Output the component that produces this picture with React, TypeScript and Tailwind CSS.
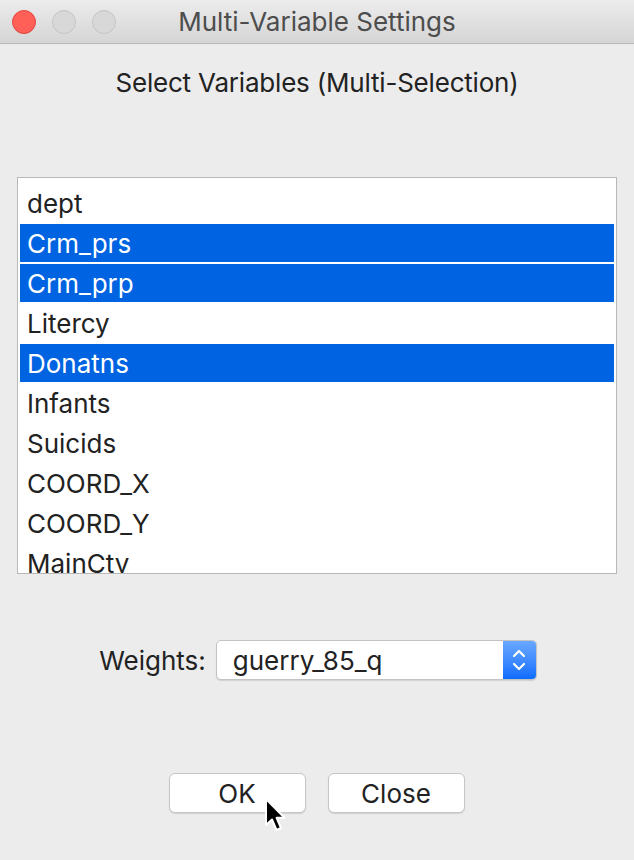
const font = { fontFamily: 'Inter, "Liberation Sans", Arial, sans-serif' };

const items = [
  { name: 'dept', selected: false },
  { name: 'Crm_prs', selected: true },
  { name: 'Crm_prp', selected: true },
  { name: 'Litercy', selected: false },
  { name: 'Donatns', selected: true },
  { name: 'Infants', selected: false },
  { name: 'Suicids', selected: false },
  { name: 'COORD_X', selected: false },
  { name: 'COORD_Y', selected: false },
  { name: 'MainCty', selected: false },
];

function TitleBar() {
  return (
    <div className="relative flex h-[44px] items-center border-b border-[#b9b9b9] bg-gradient-to-b from-[#ececec] to-[#d5d5d5]">
      <div className="ml-[12px] flex gap-[16px]">
        <span className="h-[24px] w-[24px] rounded-full border border-[#e0443e] bg-[#fe5f57]" />
        <span className="h-[24px] w-[24px] rounded-full border border-[#c4c4c4] bg-[#d8d8d8]" />
        <span className="h-[24px] w-[24px] rounded-full border border-[#c4c4c4] bg-[#d8d8d8]" />
      </div>
      <div className="absolute inset-0 flex items-center justify-center pb-[1px] text-[26px] text-[#4d4d4d]">
        Multi-Variable Settings
      </div>
    </div>
  );
}

function Cursor() {
  return (
    <svg className="absolute left-[263px] top-[796px]" width="30" height="40" viewBox="0 0 30 40">
      <path
        d="M3 3 L3 29 L9 23.5 L13.5 34 L18 32 L13.6 21.8 L21.5 21.8 Z"
        fill="#000"
        stroke="#fff"
        strokeWidth="2"
        strokeLinejoin="round"
      />
    </svg>
  );
}

export default function App() {
  return (
    <div className="relative h-[860px] w-[634px] overflow-hidden bg-[#ececec] text-[#222]" style={font}>
      <TitleBar />
      <div className="flex h-[76px] items-center justify-center pt-[1px] text-[26px] tracking-[-0.2px]">
        Select Variables (Multi-Selection)
      </div>
      <div className="mx-[17px] mt-[57px] h-[397px] overflow-hidden border border-[#b8b8b8] bg-white px-[2px] pt-[6px]">
        {items.map((it) => (
          <div key={it.name} className="h-[40px] pb-[2px]">
            <div
              className={
                'flex h-[38px] items-center pl-[7px] text-[26px] ' +
                (it.selected ? 'bg-[#0063e1] text-white' : 'text-[#222]')
              }
            >
              {it.name}
            </div>
          </div>
        ))}
      </div>
      <div className="mt-[66px] flex items-center justify-center gap-[10px] pl-[2px]">
        <span className="text-[26px]">Weights:</span>
        <div className="flex h-[40px] w-[321px] overflow-hidden rounded-[5px] border border-[#c3c3c3] bg-white shadow-[0_1px_1px_rgba(0,0,0,0.12)]">
          <div className="flex flex-1 items-center pl-[16px] text-[26px]">guerry_85_q</div>
          <div className="flex w-[33px] items-center justify-center bg-gradient-to-b from-[#6aa8ff] to-[#0a6cff]">
            <svg width="16" height="26" viewBox="0 0 16 26" fill="none" stroke="#fff" strokeWidth="2.2" strokeLinecap="round" strokeLinejoin="round">
              <path d="M3 9 L8 4 L13 9" />
              <path d="M3 17 L8 22 L13 17" />
            </svg>
          </div>
        </div>
      </div>
      <div className="mt-[93px] flex justify-center gap-[22px] pr-[1px]">
        <button className="h-[40px] w-[137px] rounded-[6px] border border-[#c6c6c6] bg-white text-[26px] shadow-[0_1px_1px_rgba(0,0,0,0.12)]">
          OK
        </button>
        <button className="h-[40px] w-[137px] rounded-[6px] border border-[#c6c6c6] bg-white text-[26px] shadow-[0_1px_1px_rgba(0,0,0,0.12)]">
          Close
        </button>
      </div>
      <Cursor />
    </div>
  );
}
